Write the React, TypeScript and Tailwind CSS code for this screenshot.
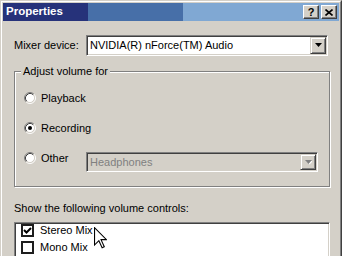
import React from "react";

const font = { fontFamily: '"Liberation Sans", Arial, sans-serif' };

function Radio({ checked }: { checked?: boolean }) {
  return (
    <svg width="12" height="12" viewBox="0 0 12 12" className="shrink-0">
      <circle cx="6" cy="6" r="4.5" fill="#fff" />
      <path d="M2.11 9.89 A5.5 5.5 0 0 1 9.89 2.11" fill="none" stroke="#808080" />
      <path d="M9.89 2.11 A5.5 5.5 0 0 1 2.11 9.89" fill="none" stroke="#fff" />
      <path d="M2.82 9.18 A4.5 4.5 0 0 1 9.18 2.82" fill="none" stroke="#404040" />
      <path d="M9.18 2.82 A4.5 4.5 0 0 1 2.82 9.18" fill="none" stroke="#d4d0c8" />
      {checked && <circle cx="6" cy="6" r="2" fill="#000" />}
    </svg>
  );
}

function Check({ checked }: { checked?: boolean }) {
  return (
    <div className="w-[13px] h-[13px] shrink-0 border-2 border-[#1e1e1e] bg-white flex items-center justify-center">
      {checked && (
        <svg width="9" height="9" viewBox="0 0 9 9">
          <path d="M1 4 L3.5 6.5 L8 2" fill="none" stroke="#000" strokeWidth="2" />
        </svg>
      )}
    </div>
  );
}

function DropButton({ disabled }: { disabled?: boolean }) {
  return (
    <div className="w-[16px] h-full shrink-0 bg-[#d4d0c8] border border-t-[#d4d0c8] border-l-[#d4d0c8] border-r-[#404040] border-b-[#404040] shadow-[inset_1px_1px_0_#fff,inset_-1px_-1px_0_#808080] flex items-center justify-center">
      <svg width="7" height="5" viewBox="0 0 7 5">
        {disabled && <path d="M1 1 H8 L4.5 4.5 Z" fill="#fff" />}
        <path d="M0 0 H7 L3.5 4 Z" fill={disabled ? "#808080" : "#000"} />
      </svg>
    </div>
  );
}

function Combo({ text, disabled, className }: { text: string; disabled?: boolean; className: string }) {
  return (
    <div
      className={`${className} flex border border-t-[#808080] border-l-[#808080] border-r-white border-b-white p-[1px] shadow-[inset_1px_1px_0_#404040,inset_-1px_-1px_0_#d4d0c8] ${
        disabled ? "bg-[#d4d0c8]" : "bg-white"
      }`}
    >
      <div className={`flex-1 pl-[2px] flex items-center text-[11px] ${disabled ? "text-[#808080]" : "text-black"}`}>
        {text}
      </div>
      <DropButton disabled={disabled} />
    </div>
  );
}

function CaptionButton({ children }: { children: React.ReactNode }) {
  return (
    <div className="w-[16px] h-[14px] bg-[#d4d0c8] border border-t-white border-l-white border-r-[#404040] border-b-[#404040] shadow-[inset_-1px_-1px_0_#808080] flex items-center justify-center">
      {children}
    </div>
  );
}

export default function App() {
  return (
    <div className="w-[342px] h-[256px] overflow-hidden relative select-none" style={font}>
      <div className="w-[342px] h-[300px] bg-[#d4d0c8] border border-t-[#d4d0c8] border-l-[#d4d0c8] border-r-[#404040] border-b-[#404040]">
        <div className="h-full border border-t-white border-l-white border-r-[#808080] border-b-[#808080] p-[1px] flex flex-col">
          {/* title bar */}
          <div className="h-[18px] shrink-0 flex items-center justify-between pl-[3px] pr-[2px] bg-[linear-gradient(90deg,#26327a_0_85px,#476fa8_85px_180px,#80a8d3_180px)]">
            <span className="text-white font-bold text-[11.5px] leading-none">Properties</span>
            <div className="flex gap-[2px]">
              <CaptionButton>
                <span className="text-black font-bold text-[11px] leading-none mt-[1px]">?</span>
              </CaptionButton>
              <CaptionButton>
                <svg width="8" height="7" viewBox="0 0 8 7">
                  <path d="M0.5 0.5 L7.5 6.5 M7.5 0.5 L0.5 6.5" stroke="#000" strokeWidth="1.6" />
                </svg>
              </CaptionButton>
            </div>
          </div>

          {/* body */}
          <div className="pl-[11px] flex flex-col text-[11px] text-black">
            <div className="mt-[14px] flex items-center h-[21px]">
              <span className="w-[72px]">Mixer device:</span>
              <Combo className="w-[242px] h-[21px]" text="NVIDIA(R) nForce(TM) Audio" />
            </div>

            <div className="mt-[15px] w-[316px] h-[116px] border border-[#808080] shadow-[inset_1px_1px_0_#fff,1px_1px_0_#fff] flex flex-col">
              <div className="-mt-[8px] ml-[6px] w-fit px-[2px] bg-[#d4d0c8] leading-[14px]">Adjust volume for</div>
              <div className="pl-[9px] mt-[12px] flex flex-col gap-[14px]">
                <div className="h-[16px] flex items-center">
                  <Radio />
                  <span className="ml-[5px]">Playback</span>
                </div>
                <div className="h-[16px] flex items-center">
                  <Radio checked />
                  <span className="ml-[5px]">Recording</span>
                </div>
                <div className="flex items-start">
                  <div className="h-[16px] flex items-center">
                    <Radio />
                    <span className="ml-[5px] w-[45px]">Other</span>
                  </div>
                  <Combo className="mt-[2px] w-[232px] h-[20px]" text="Headphones" disabled />
                </div>
              </div>
            </div>

            <div className="mt-[14px] leading-[14px]">Show the following volume controls:</div>

            <div className="mt-[7px] w-[316px] h-[80px] bg-white border border-t-[#808080] border-l-[#808080] border-r-white border-b-white p-[1px] shadow-[inset_1px_1px_0_#404040,inset_-1px_-1px_0_#d4d0c8]">
              <div className="pl-[5px] flex flex-col gap-[4px]">
                <div className="h-[13px] flex items-center">
                  <Check checked />
                  <span className="ml-[6px] leading-[13px]">Stereo Mix</span>
                </div>
                <div className="h-[13px] flex items-center">
                  <Check />
                  <span className="ml-[6px] leading-[13px]">Mono Mix</span>
                </div>
              </div>
            </div>
          </div>
        </div>
      </div>

      {/* mouse pointer */}
      <svg className="absolute left-[94px] top-[227px]" width="13" height="22" viewBox="0 0 12 20">
        <path d="M0.5 0.5 L0.5 16.5 L4.5 12.5 L7.5 19 L9.5 18 L6.5 11.5 L11.5 11.5 Z" fill="#fff" stroke="#000" strokeWidth="1" strokeLinejoin="miter" />
      </svg>
    </div>
  );
}
